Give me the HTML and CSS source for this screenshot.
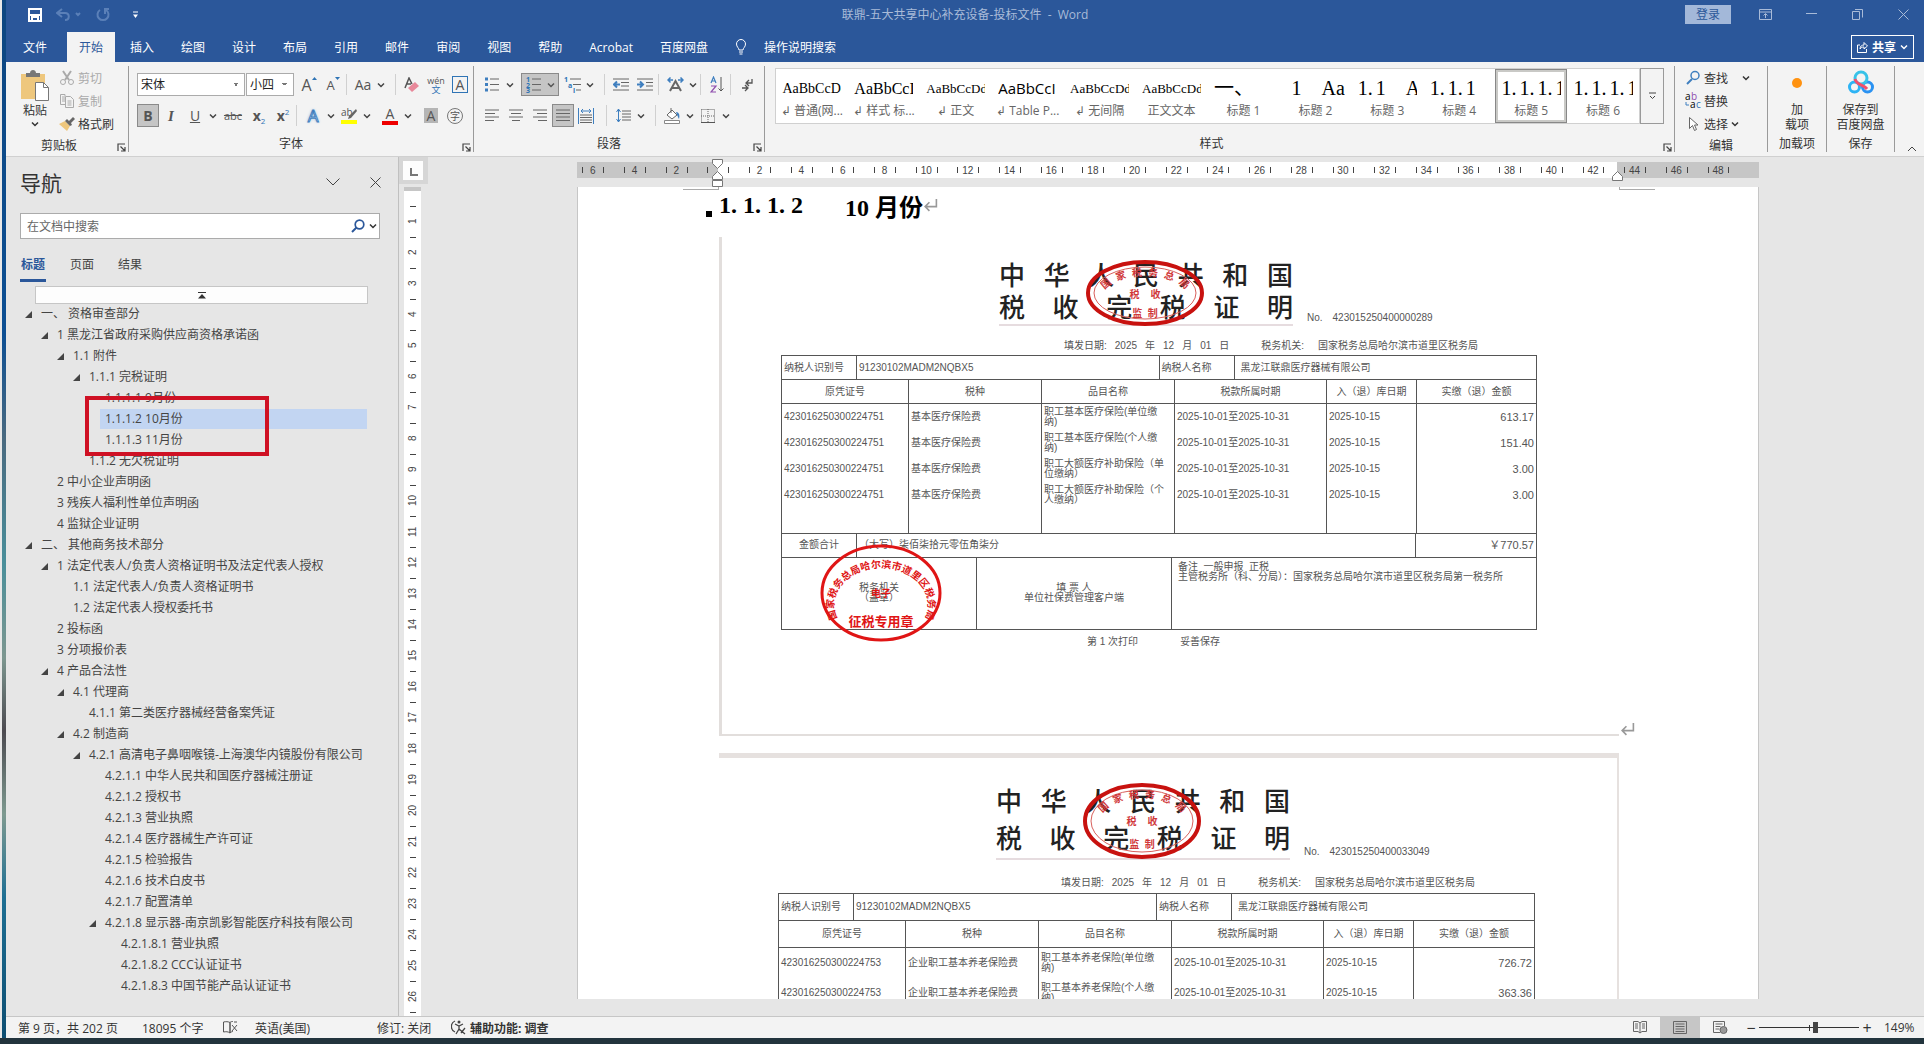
FILE: index.html
```html
<!DOCTYPE html>
<html lang="zh-CN">

<head>
    <meta charset="utf-8">
    <title>联鼎-五大共享中心补充设备-投标文件 - Word</title>
    <link rel="stylesheet" href="styles.css">
</head>

<body>
    <svg class="defs" width="0" height="0">
        <symbol id="chev" viewBox="0 0 8 8"><path d="M1 2.5 4 5.5 7 2.5" fill="none" stroke="currentColor" stroke-width="1.5"/></symbol>
        <symbol id="launch" viewBox="0 0 9 9"><path d="M1 8V1h7M3.500 3.500 7.500 7.500M8 4v4H4" fill="none" stroke="#444" stroke-width="1.200"/></symbol>
        <symbol id="enter" viewBox="0 0 14 14"><path d="M12.500 1v7H2M6 4 2 8l4 4" fill="none" stroke="#999" stroke-width="1.500"/></symbol>
    </svg>

    <div class="app">
        <header>
            <div class="titlebar">
                <div class="quick">
                    <button aria-label="保存"><svg width="14" height="14" viewBox="0 0 14 14"><path d="M1 1h12v12H1zM1 7h12M4 13V9h6v4" fill="none" stroke="#fff" stroke-width="2"/></svg></button>
                    <button aria-label="撤消"><svg width="26" height="14" viewBox="0 0 26 14"><path d="M6 1 1 5l5 4M1 5h8c5 0 5 7 0 7M20 5l2 2 2-2" fill="none" stroke="#5b80b8" stroke-width="2"/></svg></button>
                    <button aria-label="重复"><svg width="14" height="14" viewBox="0 0 14 14"><path d="M4 2a5.500 5.500 0 1 0 6 0M13 1H9v5" fill="none" stroke="#5b80b8" stroke-width="2"/></svg></button>
                    <button class="more" aria-label="自定义快速访问工具栏"><svg width="7" height="8" viewBox="0 0 7 8"><path d="M1 1h5" stroke="#fff"/><path d="M1 3.500h5L3.500 7z" fill="#fff"/></svg></button>
                </div>
                <div class="doc-title">联鼎-五大共享中心补充设备-投标文件&nbsp; -&nbsp; Word</div>
                <div class="win-buttons">
                    <button class="login">登录</button>
                    <button aria-label="功能区显示选项"><svg width="13" height="11" viewBox="0 0 13 11"><path d="M.5.5h12v10H.5zM.5 3h12M6.500 9V5M4.500 6.500l2-2 2 2" fill="none" stroke="#a9bbd8"/></svg></button>
                    <button aria-label="最小化"><svg width="11" height="11" viewBox="0 0 11 11"><path d="M0 4.500h11" stroke="#a9bbd8"/></svg></button>
                    <button aria-label="还原"><svg width="11" height="11" viewBox="0 0 11 11"><path d="M.5 2.500h7v8h-7zM3 .5h7.500v8" fill="none" stroke="#a9bbd8"/></svg></button>
                    <button aria-label="关闭"><svg width="11" height="11" viewBox="0 0 11 11"><path d="M.5.5l10 10M10.500.5l-10 10" stroke="#a9bbd8"/></svg></button>
                </div>
            </div>
            <nav class="tabs">
                <button class="file">文件</button>
                <button class="active">开始</button>
                <button>插入</button>
                <button>绘图</button>
                <button>设计</button>
                <button>布局</button>
                <button>引用</button>
                <button>邮件</button>
                <button>审阅</button>
                <button>视图</button>
                <button>帮助</button>
                <button>Acrobat</button>
                <button>百度网盘</button>
                <button class="tell"><svg width="12" height="16" viewBox="0 0 12 16"><path d="M4 11C4 9 1.500 8 1.500 5a4.500 4.500 0 0 1 9 0C10.500 8 8 9 8 11zM4 13h4M4.500 15h3" fill="none" stroke="#fff"/></svg>操作说明搜索</button>
                <button class="share"><svg width="11" height="12" viewBox="0 0 11 12"><path d="M3 4H.5v7.500h9V8M3 8c0-3 2-4 4-4V1.500l3.500 3.500L7 8V6C5 6 4 6.500 3 8z" fill="none" stroke="#fff"/></svg>共享<svg width="8" height="8"><use href="#chev"/></svg></button>
            </nav>
        </header>

        <div class="ribbon">
            <section class="group clipboard">
                <div class="body">
                    <button class="big">
                        <svg width="30" height="31" viewBox="0 0 30 31"><path d="M1 4h24v25H1z" fill="#eec77d"/><path d="M6 7V3h4c0-4 6-4 6 0h4v4z" fill="#777"/><path d="M15.500 12.500h8l5 5v13h-13z" fill="#fff" stroke="#777"/><path d="M23.500 12.500v5h5" fill="none" stroke="#777"/></svg>
                        <span>粘贴</span>
                        <svg width="8" height="8"><use href="#chev"/></svg>
                    </button>
                    <div class="stack">
                        <button class="off"><svg width="16" height="16" viewBox="0 0 16 16"><path d="M4 1l6 9M12 1 6 10" stroke="#aaa" stroke-width="2"/><circle cx="4" cy="12" r="2.500" fill="none" stroke="#aaa"/><circle cx="12" cy="12" r="2.500" fill="none" stroke="#aaa"/></svg>剪切</button>
                        <button class="off"><svg width="16" height="16" viewBox="0 0 16 16"><path d="M6 3V1.500H1.500v10H6M3 4h3M3 6h3M3 8h3M6.500 3.500h5l3 3v8h-8zM8.500 8h4M8.500 10h4M8.500 12h4" fill="none" stroke="#aaa"/></svg>复制</button>
                        <button><svg width="16" height="16" viewBox="0 0 16 16"><path d="M0 8l6-3 5 5-3 5z" fill="#eec77d"/><path d="M6 5l2-2 2 2 4-4 2 2-4 4 1 2-2 1z" fill="#666"/></svg>格式刷</button>
                    </div>
                </div>
                <h2>剪贴板</h2>
                <button class="launch" aria-label="剪贴板选项"><svg width="9" height="9"><use href="#launch"/></svg></button>
            </section>

            <section class="group font">
                <div class="body rows">
                    <div class="row">
                        <select class="face" aria-label="字体"><option>宋体</option></select>
                        <select class="size" aria-label="字号"><option>小四</option></select>
                        <button class="tb grow">A<svg width="5" height="3" viewBox="0 0 5 3"><path d="M0 3h5L2.500 0z" fill="#2f74b5"/></svg></button>
                        <button class="tb shrink">A<svg width="5" height="3" viewBox="0 0 5 3"><path d="M0 0h5L2.500 3z" fill="#2f74b5"/></svg></button>
                        <i class="sep"></i>
                        <button class="tb">Aa</button>
                        <button class="drop" aria-label="更改大小写"><svg width="8" height="8"><use href="#chev"/></svg></button>
                        <i class="sep wide"></i>
                        <button class="tb" aria-label="清除格式"><svg width="16" height="16" viewBox="0 0 16 16"><path d="M1 11 5 1l3 6M3 7h4" fill="none" stroke="#555" stroke-width="1.500"/><path d="M4 11l7-6 4 4-7 6z" fill="#e8889a"/></svg></button>
                        <button class="tb wen"><span>wén</span><span class="blue">文</span></button>
                        <button class="tb"><span class="boxed">A</span></button>
                    </div>
                    <div class="row">
                        <button class="tb on"><b>B</b></button>
                        <button class="tb ital">I</button>
                        <button class="tb"><u>U</u></button>
                        <button class="drop" aria-label="下划线"><svg width="8" height="8"><use href="#chev"/></svg></button>
                        <button class="tb abc"><s>abc</s></button>
                        <button class="tb"><b>x</b><sub>2</sub></button>
                        <button class="tb"><b>x</b><sup>2</sup></button>
                        <i class="sep"></i>
                        <button class="tb glow">A</button>
                        <button class="drop" aria-label="文本效果"><svg width="8" height="8"><use href="#chev"/></svg></button>
                        <button class="tb" aria-label="突出显示"><svg width="17" height="17" viewBox="0 0 17 17"><text x="0" y="9" class="hl-text">ab</text><path d="M15 2 8 9l-1 3 3-1 6-7z" fill="#666"/><path d="M0 13h16v4H0z" fill="#ff0"/></svg></button>
                        <button class="drop spaced" aria-label="突出显示颜色"><svg width="8" height="8"><use href="#chev"/></svg></button>
                        <button class="tb"><span class="color-a">A</span></button>
                        <button class="drop spaced" aria-label="字体颜色"><svg width="8" height="8"><use href="#chev"/></svg></button>
                        <button class="tb"><span class="shade">A</span></button>
                        <button class="tb"><span class="ring">字</span></button>
                    </div>
                </div>
                <h2>字体</h2>
                <button class="launch" aria-label="字体选项"><svg width="9" height="9"><use href="#launch"/></svg></button>
            </section>

            <section class="group para">
                <div class="body rows">
                    <div class="row">
                        <button class="tb" aria-label="项目符号"><svg width="14" height="15" viewBox="0 0 14 15"><path d="M5 2h9M5 7.500h9M5 13h9" stroke="#666"/><path d="M0 .5h3v3H0zM0 6h3v3H0zM0 11.500h3v3H0z" fill="#3f7fbf"/></svg></button>
                        <button class="drop" aria-label="项目符号库"><svg width="8" height="8"><use href="#chev"/></svg></button>
                        <button class="tb on numbered" aria-label="编号"><svg width="16" height="17" viewBox="0 0 16 17"><path d="M6 3h9M6 8.500h9M6 14h9" stroke="#666"/><text x="0" y="6" class="tiny">1</text><text x="0" y="12" class="tiny">2</text><text x="0" y="17" class="tiny">3</text></svg><svg width="8" height="8"><use href="#chev"/></svg></button>
                        <button class="tb" aria-label="多级列表"><svg width="17" height="17" viewBox="0 0 17 17"><path d="M6 3h11M9 8.500h8M12 14h5" stroke="#666"/><text x="0" y="6" class="tiny">1</text><text x="4" y="12" class="tiny">a</text><text x="9" y="17" class="tiny">i</text></svg></button>
                        <button class="drop" aria-label="列表库"><svg width="8" height="8"><use href="#chev"/></svg></button>
                        <i class="sep wide"></i>
                        <button class="tb" aria-label="减少缩进"><svg width="16" height="14" viewBox="0 0 16 14"><path d="M0 1h16M8 4.500h8M8 8h8M0 12h16" stroke="#666"/><path d="M7 6.500H1M4 3.500l-3 3 3 3" fill="none" stroke="#3f7fbf" stroke-width="2"/></svg></button>
                        <button class="tb" aria-label="增加缩进"><svg width="16" height="14" viewBox="0 0 16 14"><path d="M0 1h16M9 4.500h7M9 8h7M0 12h16" stroke="#666"/><path d="M0 6.500h6M3 3.500l3 3-3 3" fill="none" stroke="#3f7fbf" stroke-width="2"/></svg></button>
                        <i class="sep"></i>
                        <button class="tb" aria-label="中文版式"><svg width="17" height="15" viewBox="0 0 17 15"><path d="M3 14 8.500 4 14 14M5 11h7" fill="none" stroke="#666" stroke-width="2"/><path d="M6 3H1M3.500.5 1 3l2.500 2.500M11 3h5M13.500.5 16 3l-2.500 2.500" fill="none" stroke="#3f7fbf" stroke-width="1.500"/></svg></button>
                        <button class="drop" aria-label="中文版式选项"><svg width="8" height="8"><use href="#chev"/></svg></button>
                        <i class="sep"></i>
                        <button class="tb" aria-label="排序"><svg width="14" height="17" viewBox="0 0 14 17"><path d="M1 7 3.500 1 6 7M2 5h3" fill="none" stroke="#3f7fbf" stroke-width="1.200"/><path d="M1 10h5l-5 6h5" fill="none" stroke="#8f4fae" stroke-width="1.200"/><path d="M11 1v14M8.500 12.500 11 15l2.500-2.500" fill="none" stroke="#555"/></svg></button>
                        <i class="sep"></i>
                        <button class="tb" aria-label="显示编辑标记"><svg width="13" height="14" viewBox="0 0 13 14"><path d="M11 1v4H5M8 2 5 5l3 3M1 10h6M4 7l3 3-3 3" fill="none" stroke="#555" stroke-width="1.300"/></svg></button>
                    </div>
                    <div class="row">
                        <button class="tb" aria-label="左对齐"><svg width="14" height="13" viewBox="0 0 14 13"><path d="M0 1h14M0 4.500h10M0 8h14M0 11.500h9" stroke="#666"/></svg></button>
                        <button class="tb" aria-label="居中"><svg width="14" height="13" viewBox="0 0 14 13"><path d="M0 1h14M2 4.500h10M0 8h14M3 11.500h8" stroke="#666"/></svg></button>
                        <button class="tb" aria-label="右对齐"><svg width="14" height="13" viewBox="0 0 14 13"><path d="M0 1h14M4 4.500h10M0 8h14M5 11.500h9" stroke="#666"/></svg></button>
                        <button class="tb on" aria-label="两端对齐"><svg width="14" height="13" viewBox="0 0 14 13"><path d="M0 1h14M0 4.500h14M0 8h14M0 11.500h14" stroke="#666"/></svg></button>
                        <button class="tb" aria-label="分散对齐"><svg width="16" height="16" viewBox="0 0 16 16"><path d="M.5 0v16M15.500 0v16M3 3h10M5 1 3 3l2 2M11 1l2 2-2 2" fill="none" stroke="#3f7fbf"/><path d="M2 7h12M2 9.500h12M2 12h12M2 14.500h12" stroke="#666"/></svg></button>
                        <i class="sep wide"></i>
                        <button class="tb" aria-label="行距"><svg width="15" height="15" viewBox="0 0 15 15"><path d="M6 3h9M6 6h9M6 9h9M6 12h9" stroke="#666"/><path d="M2.500 1v13M.5 4l2-3 2 3M.5 11l2 3 2-3" fill="none" stroke="#3f7fbf"/></svg></button>
                        <button class="drop" aria-label="行距选项"><svg width="8" height="8"><use href="#chev"/></svg></button>
                        <i class="sep wide"></i>
                        <button class="tb" aria-label="底纹"><svg width="17" height="16" viewBox="0 0 17 16"><path d="M3 7l5-5 5 5-5 4zM7 0v5" fill="#fff" stroke="#666"/><path d="M12 4c3 0 4 3 3 7-1-1-1-3-2-4z" fill="#3f7fbf"/><path d="M.5 12.500h15v3H.5z" fill="#fff" stroke="#888"/></svg></button>
                        <button class="drop" aria-label="底纹颜色"><svg width="8" height="8"><use href="#chev"/></svg></button>
                        <button class="tb" aria-label="边框"><svg width="14" height="14" viewBox="0 0 14 14"><path d="M.5.5h13v13M.5.5v13M7 0v13M0 7h14" fill="none" stroke="#666" stroke-dasharray="1 1"/><path d="M0 13.500h14" stroke="#555"/></svg></button>
                        <button class="drop" aria-label="边框选项"><svg width="8" height="8"><use href="#chev"/></svg></button>
                    </div>
                </div>
                <h2>段落</h2>
                <button class="launch" aria-label="段落选项"><svg width="9" height="9"><use href="#launch"/></svg></button>
            </section>

            <section class="group styles">
                <div class="body">
                    <div class="gallery">
                        <button><span class="pre">AaBbCcDd</span><span class="name">↲ 普通(网...</span></button>
                        <button><span class="pre bigger">AaBbCcI</span><span class="name">↲ 样式 标...</span></button>
                        <button><span class="pre small">AaBbCcDdE</span><span class="name">↲ 正文</span></button>
                        <button><span class="pre sans">AaBbCcI</span><span class="name">↲ Table P...</span></button>
                        <button><span class="pre small">AaBbCcDdE</span><span class="name">↲ 无间隔</span></button>
                        <button><span class="pre small">AaBbCcDdE</span><span class="name">正文文本</span></button>
                        <button><span class="pre head">一、</span><span class="name">标题 1</span></button>
                        <button><span class="pre head end">1 &nbsp; &nbsp;Aa</span><span class="name">标题 2</span></button>
                        <button><span class="pre head"><i>1.</i><i>1</i> &nbsp; &nbsp;A</span><span class="name">标题 3</span></button>
                        <button><span class="pre head"><i>1.</i><i>1.</i><i>1</i></span><span class="name">标题 4</span></button>
                        <button class="picked"><span class="pre head"><i>1.</i><i>1.</i><i>1.</i><i>1</i></span><span class="name">标题 5</span></button>
                        <button><span class="pre head"><i>1.</i><i>1.</i><i>1.</i><i>1</i></span><span class="name">标题 6</span></button>
                    </div>
                    <button class="gallery-more" aria-label="其他样式"><svg width="9" height="8" viewBox="0 0 9 8"><path d="M1 1h7M2 4l2.500 2.500L7 4" fill="none" stroke="#444"/></svg></button>
                </div>
                <h2>样式</h2>
                <button class="launch" aria-label="样式选项"><svg width="9" height="9"><use href="#launch"/></svg></button>
            </section>

            <section class="group edit">
                <div class="body">
                    <div class="stack">
                        <button><svg width="16" height="16" viewBox="0 0 16 16"><circle cx="10" cy="5.500" r="4" fill="none" stroke="#3f7fbf" stroke-width="1.500"/><path d="M7 9l-5 5" stroke="#3f7fbf" stroke-width="2"/></svg>查找<svg class="far" width="8" height="8"><use href="#chev"/></svg></button>
                        <button><svg width="16" height="17" viewBox="0 0 16 17"><text x="0" y="8" class="rep">a</text><text x="6" y="8" class="rep purple">b</text><text x="5" y="16" class="rep">a</text><text x="11" y="16" class="rep blue">c</text><path d="M1 10v3h3" fill="none" stroke="#3f7fbf"/></svg>替换</button>
                        <button><svg width="16" height="16" viewBox="0 0 16 16"><path d="M4.500 1.500v11l3-3 2 5 2-1-2-4.500h3.500z" fill="#fff" stroke="#666"/></svg>选择<svg width="8" height="8"><use href="#chev"/></svg></button>
                    </div>
                </div>
                <h2>编辑</h2>
            </section>

            <section class="group addin">
                <div class="body">
                    <button class="big"><svg width="28" height="34" viewBox="0 0 28 34"><circle cx="14" cy="15" r="5" fill="#ff9210"/></svg><span>加<br>载项</span></button>
                </div>
                <h2>加载项</h2>
            </section>

            <section class="group save">
                <div class="body">
                    <button class="big"><svg width="28" height="34" viewBox="0 0 28 34"><circle cx="7.500" cy="19" r="5" fill="none" stroke="#2cb3f4" stroke-width="3"/><circle cx="20.500" cy="19" r="5" fill="none" stroke="#2a92f2" stroke-width="3"/><circle cx="14" cy="10" r="6" fill="none" stroke="#37c2e8" stroke-width="3"/><path d="M8 11c1 6 8 5 12 10" fill="none" stroke="#f0506c" stroke-width="3"/></svg><span>保存到<br>百度网盘</span></button>
                </div>
                <h2>保存</h2>
            </section>
            <button class="collapse" aria-label="折叠功能区"><svg width="10" height="6" viewBox="0 0 10 6"><path d="M1 5l4-4 4 4" fill="none" stroke="#444"/></svg></button>
        </div>

        <main>
            <aside class="nav-pane">
                <div class="pane-head">
                    <h1>导航</h1>
                    <button aria-label="任务窗格选项"><svg width="14" height="8" viewBox="0 0 14 8"><path d="M.5.5 7 7 13.500.5" fill="none" stroke="#444"/></svg></button>
                    <button aria-label="关闭导航"><svg width="11" height="11" viewBox="0 0 11 11"><path d="M.5.5l10 10M10.500.5l-10 10" stroke="#444"/></svg></button>
                </div>
                <div class="search">
                    <input type="text" placeholder="在文档中搜索" aria-label="在文档中搜索">
                    <button aria-label="搜索"><svg width="14" height="14" viewBox="0 0 14 14"><circle cx="8.500" cy="5.500" r="4.300" fill="none" stroke="#2b579a" stroke-width="1.700"/><path d="M5.500 8.500 1 13" stroke="#2b579a" stroke-width="2"/></svg></button>
                    <button aria-label="搜索选项"><svg width="8" height="8"><use href="#chev"/></svg></button>
                </div>
                <div class="pane-tabs">
                    <button class="active">标题</button>
                    <button>页面</button>
                    <button>结果</button>
                </div>
                <button class="to-top" aria-label="跳转到文档开头"><svg width="8" height="7" viewBox="0 0 8 7"><path d="M0 .5h8" stroke="#333"/><path d="M0 6.500h8L4 2z" fill="#333"/></svg></button>
                <ul class="tree">
                    <li class="l1 open"><a href="#">一、&nbsp;资格审查部分</a></li>
                    <li class="l2 open"><a href="#">1 黑龙江省政府采购供应商资格承诺函</a></li>
                    <li class="l3 open"><a href="#">1.1 附件</a></li>
                    <li class="l4 open"><a href="#">1.1.1 完税证明</a></li>
                    <li class="l5"><a href="#">1.1.1.1 9月份</a></li>
                    <li class="l5 current"><a href="#">1.1.1.2 10月份</a></li>
                    <li class="l5"><a href="#">1.1.1.3 11月份</a></li>
                    <li class="l4"><a href="#">1.1.2 无欠税证明</a></li>
                    <li class="l2"><a href="#">2 中小企业声明函</a></li>
                    <li class="l2"><a href="#">3 残疾人福利性单位声明函</a></li>
                    <li class="l2"><a href="#">4 监狱企业证明</a></li>
                    <li class="l1 open"><a href="#">二、&nbsp;其他商务技术部分</a></li>
                    <li class="l2 open"><a href="#">1 法定代表人/负责人资格证明书及法定代表人授权</a></li>
                    <li class="l3"><a href="#">1.1 法定代表人/负责人资格证明书</a></li>
                    <li class="l3"><a href="#">1.2 法定代表人授权委托书</a></li>
                    <li class="l2"><a href="#">2 投标函</a></li>
                    <li class="l2"><a href="#">3 分项报价表</a></li>
                    <li class="l2 open"><a href="#">4 产品合法性</a></li>
                    <li class="l3 open"><a href="#">4.1 代理商</a></li>
                    <li class="l4"><a href="#">4.1.1 第二类医疗器械经营备案凭证</a></li>
                    <li class="l3 open"><a href="#">4.2 制造商</a></li>
                    <li class="l4 open"><a href="#">4.2.1 高清电子鼻咽喉镜-上海澳华内镜股份有限公司</a></li>
                    <li class="l5"><a href="#">4.2.1.1 中华人民共和国医疗器械注册证</a></li>
                    <li class="l5"><a href="#">4.2.1.2 授权书</a></li>
                    <li class="l5"><a href="#">4.2.1.3 营业执照</a></li>
                    <li class="l5"><a href="#">4.2.1.4 医疗器械生产许可证</a></li>
                    <li class="l5"><a href="#">4.2.1.5 检验报告</a></li>
                    <li class="l5"><a href="#">4.2.1.6 技术白皮书</a></li>
                    <li class="l5"><a href="#">4.2.1.7 配置清单</a></li>
                    <li class="l5 open"><a href="#">4.2.1.8 显示器-南京凯影智能医疗科技有限公司</a></li>
                    <li class="l6"><a href="#">4.2.1.8.1 营业执照</a></li>
                    <li class="l6"><a href="#">4.2.1.8.2 CCC认证证书</a></li>
                    <li class="l6"><a href="#">4.2.1.8.3 中国节能产品认证证书</a></li>
                    <li class="mark" aria-hidden="true"></li>
                </ul>
            </aside>

            <div class="v-ruler">
                <div class="corner"><span></span></div>
                <div class="v-scale">
                    <span>1</span><span>2</span><span>3</span><span>4</span><span>5</span><span>6</span><span>7</span><span>8</span><span>9</span><span>10</span><span>11</span><span>12</span><span>13</span><span>14</span><span>15</span><span>16</span><span>17</span><span>18</span><span>19</span><span>20</span><span>21</span><span>22</span><span>23</span><span>24</span><span>25</span><span>26</span><span></span>
                </div>
            </div>

            <div class="doc">
                <div class="h-ruler">
                    <div class="h-scale">
                        <span>6</span><span>4</span><span>2</span><span></span><span>2</span><span>4</span><span>6</span><span>8</span><span>10</span><span>12</span><span>14</span><span>16</span><span>18</span><span>20</span><span>22</span><span>24</span><span>26</span><span>28</span><span>30</span><span>32</span><span>34</span><span>36</span><span>38</span><span>40</span><span>42</span><span>44</span><span>46</span><span>48</span>
                    </div>
                    <svg class="indent-left" width="11" height="28" viewBox="0 0 11 28"><path d="M.5.5h10v4l-5 5-5-5zM.5 20.500v-3l5-5 5 5v3zM.5 21.500h10v6H.5z" fill="#fff" stroke="#777"/></svg>
                    <svg class="indent-right" width="11" height="10" viewBox="0 0 11 10"><path d="M.5 9.500v-4l5-5 5 5v4z" fill="#fff" stroke="#777"/></svg>
                </div>
                <article class="paper">
                    <div class="crop"><i></i><i></i></div>
                    <h3><i>1.</i><i>1.</i><i>1.</i><i class="last">2</i>10 月份<svg width="15" height="15"><use href="#enter"/></svg></h3>

                    <figure class="cert first">
                        <div class="cert-head">
                            <div class="cert-title">
                                <p>中华人民共和国</p>
                                <p>税收完税证明</p>
                                <svg class="seal" viewBox="0 0 118 68">
                                    <ellipse cx="59" cy="34" rx="57" ry="31" fill="none" stroke="#c8120f" stroke-width="4"/>
                                    <ellipse cx="59" cy="34" rx="51" ry="26" fill="none" stroke="#d8605c"/>
                                    <path id="arc1" d="M16 38A43 21 0 0 1 102 38" fill="none"/>
                                    <text class="seal-text"><textPath href="#arc1" startOffset="50%">国&#160;&#160;家&#160;&#160;税&#160;&#160;务&#160;&#160;总&#160;&#160;局</textPath></text>
                                    <text class="seal-text" x="59" y="39">税&#160;&#160;&#160;&#160;收</text>
                                    <text class="seal-text" x="59" y="58">监&#160;&#160;制</text>
                                </svg>
                            </div>
                            <div class="cert-no"><span>No.</span><span>423015250400000289</span></div>
                        </div>
                        <div class="cert-date"><span>填发日期:</span><span>2025</span><span>年</span><span>12</span><span>月</span><span>01</span><span>日</span><span class="office">税务机关:</span><span class="bureau">国家税务总局哈尔滨市道里区税务局</span></div>
                        <table class="parties">
                            <tr><th>纳税人识别号</th><td>91230102MADM2NQBX5</td><th>纳税人名称</th><td class="company">黑龙江联鼎医疗器械有限公司</td></tr>
                        </table>
                        <table class="items">
                            <thead><tr><th class="c1">原凭证号</th><th class="c2">税种</th><th class="c3">品目名称</th><th class="c4">税款所属时期</th><th class="c5">入（退）库日期</th><th>实缴（退）金额</th></tr></thead>
                            <tbody>
                                <tr><td>423016250300224751</td><td>基本医疗保险费</td><td class="item">职工基本医疗保险(单位缴纳)</td><td>2025-10-01至2025-10-31</td><td>2025-10-15</td><td class="money">613.17</td></tr>
                                <tr><td>423016250300224751</td><td>基本医疗保险费</td><td class="item">职工基本医疗保险(个人缴纳)</td><td>2025-10-01至2025-10-31</td><td>2025-10-15</td><td class="money">151.40</td></tr>
                                <tr><td>423016250300224751</td><td>基本医疗保险费</td><td class="item">职工大额医疗补助保险（单位缴纳）</td><td>2025-10-01至2025-10-31</td><td>2025-10-15</td><td class="money">3.00</td></tr>
                                <tr><td>423016250300224751</td><td>基本医疗保险费</td><td class="item">职工大额医疗补助保险（个人缴纳）</td><td>2025-10-01至2025-10-31</td><td>2025-10-15</td><td class="money">3.00</td></tr>
                                <tr><td></td><td></td><td></td><td></td><td></td><td></td></tr>
                            </tbody>
                        </table>
                        <table class="total">
                            <tr><th>金额合计</th><td>（大写）柒佰柒拾元零伍角柒分</td><td class="money">￥770.57</td></tr>
                        </table>
                        <table class="sign">
                            <tr>
                                <td>税务机关<br>（盖章）
                                    <svg class="office-seal" viewBox="0 0 122 98">
                                        <ellipse cx="61" cy="49" rx="59" ry="47" fill="none" stroke="#e01515" stroke-width="3"/>
                                        <path id="arc2" d="M17 74A47 37 0 1 1 105 74" fill="none"/>
                                        <text class="red-text"><textPath href="#arc2" startOffset="50%">国家税务总局哈尔滨市道里区税务局</textPath></text>
                                        <text class="red-text" x="61" y="53">电子</text>
                                        <text class="red-text use" x="61" y="82">征税专用章</text>
                                    </svg>
                                </td>
                                <td>填 票 人<br>单位社保费管理客户端</td>
                                <td class="remark">备注&nbsp; 一般申报&nbsp; 正税<br>主管税务所（科、分局）：国家税务总局哈尔滨市道里区税务局第一税务所</td>
                            </tr>
                        </table>
                        <figcaption><span>第 1 次打印</span><span>妥善保存</span></figcaption>
                    </figure>
                    <svg class="para-end" width="15" height="15"><use href="#enter"/></svg>

                    <figure class="cert second">
                        <div class="cert-head">
                            <div class="cert-title">
                                <p>中华人民共和国</p>
                                <p>税收完税证明</p>
                                <svg class="seal" viewBox="0 0 118 76">
                                    <ellipse cx="59" cy="38" rx="57" ry="36" fill="none" stroke="#c8120f" stroke-width="4"/>
                                    <ellipse cx="59" cy="38" rx="51" ry="31" fill="none" stroke="#d8605c"/>
                                    <path id="arc3" d="M16 40A43 25 0 0 1 102 40" fill="none"/>
                                    <text class="seal-text"><textPath href="#arc3" startOffset="50%">国&#160;&#160;家&#160;&#160;税&#160;&#160;务&#160;&#160;总&#160;&#160;局</textPath></text>
                                    <text class="seal-text" x="59" y="42">税&#160;&#160;&#160;&#160;收</text>
                                    <text class="seal-text" x="59" y="65">监&#160;&#160;制</text>
                                </svg>
                            </div>
                            <div class="cert-no"><span>No.</span><span>423015250400033049</span></div>
                        </div>
                        <div class="cert-date"><span>填发日期:</span><span>2025</span><span>年</span><span>12</span><span>月</span><span>01</span><span>日</span><span class="office">税务机关:</span><span class="bureau">国家税务总局哈尔滨市道里区税务局</span></div>
                        <table class="parties">
                            <tr><th>纳税人识别号</th><td>91230102MADM2NQBX5</td><th>纳税人名称</th><td class="company">黑龙江联鼎医疗器械有限公司</td></tr>
                        </table>
                        <table class="items">
                            <thead><tr><th class="c1">原凭证号</th><th class="c2">税种</th><th class="c3">品目名称</th><th class="c4">税款所属时期</th><th class="c5">入（退）库日期</th><th>实缴（退）金额</th></tr></thead>
                            <tbody>
                                <tr><td>423016250300224753</td><td>企业职工基本养老保险费</td><td class="item">职工基本养老保险(单位缴纳)</td><td>2025-10-01至2025-10-31</td><td>2025-10-15</td><td class="money">726.72</td></tr>
                                <tr><td>423016250300224753</td><td>企业职工基本养老保险费</td><td class="item">职工基本养老保险(个人缴纳)</td><td>2025-10-01至2025-10-31</td><td>2025-10-15</td><td class="money">363.36</td></tr>
                            </tbody>
                        </table>
                    </figure>
                </article>
            </div>
        </main>

        <footer>
            <span class="pages">第 9 页，共 202 页</span>
            <span class="words">18095 个字</span>
            <button class="proof" aria-label="校对"><svg width="15" height="13" viewBox="0 0 15 13"><path d="M7 1.500C5 .5 3 .5.500 1v10c2.500-.5 4.500-.5 6.500 1zM7 1.500V12c1-1 2-1.500 3-1.500M7 1.500c1-1 2-1 3-1M9 4l5 6M14 4 9 10M11 1h3" fill="none" stroke="#555"/></svg></button>
            <span class="lang">英语(美国)</span>
            <span class="track">修订: 关闭</span>
            <button class="access"><svg width="16" height="15" viewBox="0 0 16 15"><path d="M4 1a6 6 0 0 0 0 11M4 4l4 2 4-2M8 6v3l-3 5M8 9l6 5M14 8l-4 5" fill="none" stroke="#444" stroke-width="1.300"/><circle cx="8" cy="2" r="1.500" fill="#444"/></svg>辅助功能: 调查</button>
            <div class="views">
                <button aria-label="阅读视图"><svg width="14" height="13" viewBox="0 0 14 13"><path d="M7 2 5 .5H.5v10H5L7 12l2-1.500h4.500V.5H9zM7 2v10M2 3h3M2 5h3M2 7h3M9 3h3M9 5h3M9 7h3" fill="none" stroke="#666"/></svg></button>
                <button class="active" aria-label="页面视图"><svg width="14" height="13" viewBox="0 0 14 13"><path d="M.5.5h13v12H.5zM2.500 3h9M2.500 5.500h9M2.500 8h9M2.500 10.500h9" fill="none" stroke="#666"/></svg></button>
                <button aria-label="Web 版式"><svg width="15" height="13" viewBox="0 0 15 13"><path d="M7 11.500H.5V.5h11V5M2.500 3h7M2.500 5.500h5M2.500 8h4" fill="none" stroke="#666"/><circle cx="10.500" cy="9" r="3.500" fill="#999" stroke="#666"/></svg></button>
            </div>
            <div class="zoom">
                <button aria-label="缩小">−</button>
                <input type="range" min="0" max="200" value="113" aria-label="显示比例">
                <button aria-label="放大">+</button>
                <span>149%</span>
            </div>
        </footer>
    </div>
</body>

</html>
```
FILE: styles.css
```css
* {
    box-sizing: border-box;
}

body {
    margin: 0;
    height: 100vh;
    overflow: hidden;
    padding: 0 0 6px 6px;
    font-family: "Open Sans", "Noto Sans CJK SC", sans-serif;
    font-size: 12px;
    color: #333;
    /* desktop showing behind the window */
    background:
        linear-gradient(#22343d, #22343d) bottom / 100% 6px no-repeat,
        linear-gradient(to right, #e8e8e8 2px, transparent 2px),
        linear-gradient(#0d4680 0, #0d4f93 32%, #4a6a80 42%, #4a8f9a 54%, #7d9790 63%, #4c4a50 70%, #7e9a90 78%, #1e6f93 86%, #0c4c70 100%);
}

button {
    border: none;
    background: none;
    padding: 0;
    margin: 0;
    font: inherit;
    color: inherit;
    display: flex;
    align-items: center;
    justify-content: center;
}

h1, h2, h3, p, ul, figure {
    margin: 0;
    padding: 0;
    font-weight: normal;
}

i {
    font-style: normal;
}

svg {
    flex: none;
}

.defs {
    position: absolute;
}

.blue {
    color: #2f74b5;
    fill: #2f74b5;
}

.app {
    height: 100%;
    display: flex;
    flex-direction: column;
    background: #e6e6e6;
}

/* title bar and tabs */
header {
    background: #2b579a;
    color: #fff;
}

.titlebar {
    display: grid;
    grid-template-columns: 1fr auto 1fr;
    height: 32px;
}

.quick {
    display: flex;
    align-items: center;
    gap: 14px;
    padding-left: 22px;
    height: 29px;
}

.quick .more {
    margin-left: 8px;
}

.doc-title {
    color: #a9bbd8;
    line-height: 29px;
}

.win-buttons {
    display: flex;
    justify-content: flex-end;
    height: 28px;
    align-items: center;
    padding-right: 9px;
}

.win-buttons button {
    width: 24px;
    margin-left: 22px;
}

.win-buttons .login {
    width: 46px;
    height: 19px;
    background: #a3b8d9;
    color: #2b579a;
}

.tabs {
    display: flex;
    height: 30px;
    gap: 3px;
    padding: 0 10px 0 5px;
}

.tabs button {
    padding: 0 12px;
    height: 30px;
}

.tabs .file {
    margin-right: 5px;
}

.tabs .active {
    background: #f3f3f3;
    color: #2b579a;
}

.tabs .tell {
    gap: 17px;
}

.tabs .share {
    margin: 3px 0 0 auto;
    height: 24px;
    padding: 0 5px;
    gap: 4px;
    border: 1px solid #fff;
    font-weight: bold;
}

/* ribbon */
.ribbon {
    display: flex;
    height: 95px;
    padding: 4px 0;
    background: #f3f3f3;
    border-bottom: 1px solid #d0d0d0;
}

.group {
    position: relative;
    border-right: 1px solid #9a9a9a;
    display: flex;
    flex-direction: column;
}

.group .body {
    display: flex;
    height: 70px;
}

.group h2 {
    font-size: 12px;
    line-height: 16px;
    padding-top: 3px;
    text-align: center;
    color: #333;
}

.launch {
    position: absolute;
    right: 2px;
    bottom: 0;
}

.clipboard {
    width: 123px;
}

.clipboard h2,
.styles h2 {
    padding-right: 16px;
}

.font {
    width: 345px;
}

.font h2,
.para h2 {
    padding-right: 20px;
}

.para {
    width: 291px;
}

.styles {
    flex: 1;
    min-width: 0;
}

.edit {
    width: 93px;
}

.addin {
    width: 59px;
}

.save {
    width: 68px;
}

.big {
    flex-direction: column;
    justify-content: flex-start;
    line-height: 15px;
    padding-top: 2px;
}

.clipboard .big {
    width: 44px;
    margin-left: 7px;
    padding-top: 4px;
    gap: 2px;
}

.addin .big,
.save .big {
    flex: 1;
}

.stack {
    display: flex;
    flex-direction: column;
}

.stack button {
    height: 23px;
    gap: 3px;
    justify-content: flex-start;
}

.clipboard .stack {
    margin-left: 2px;
}

.edit .stack {
    margin-left: 10px;
}

.off {
    color: #aaa;
}

.far {
    margin-left: 11px;
}

.rep {
    font-size: 10px;
}

.purple {
    fill: #8f4fae;
}

.rows {
    flex-direction: column;
    gap: 8px;
    padding: 7px 0 0 8px;
}

.para .rows {
    padding-left: 6px;
}

.row {
    display: flex;
    height: 23px;
    align-items: center;
}

select {
    height: 23px;
    border: 1px solid #ababab;
    border-radius: 0;
    padding: 0 3px;
    margin-right: 1px;
    font: inherit;
    color: #222;
    appearance: none;
    background-color: #fff;
    background-image: linear-gradient(45deg, transparent 50%, #777 50%), linear-gradient(-45deg, transparent 50%, #777 50%);
    background-size: 3px 3px;
    background-repeat: no-repeat;
    background-position: right 8px center, right 5px center;
}

.face {
    width: 108px;
}

.size {
    width: 48px;
    margin-right: 3px;
}

.tb {
    width: 24px;
    height: 23px;
    font-size: 14px;
    line-height: 20px;
    color: #555;
}

.tb.on {
    width: 22px;
    background: #c5c5c5;
    border: 1px solid #8a8a8a;
}

.tb.numbered {
    width: 38px;
    gap: 5px;
    margin: 0 1px 0 5px;
}

.tb sup,
.tb sub {
    font-size: 8px;
    line-height: 10px;
    color: #2f74b5;
}

.tb sup {
    margin-bottom: 8px;
}

.tb sub {
    margin-top: 10px;
}

.grow {
    font-size: 16px;
}

.shrink {
    font-size: 13px;
}

.grow svg,
.shrink svg {
    margin-bottom: 12px;
}

.ital {
    font-family: "Liberation Serif", serif;
    font-style: italic;
    font-weight: bold;
    font-size: 15px;
}

.abc {
    width: 28px;
    font-size: 11px;
}

.wen {
    flex-direction: column;
    font-size: 9px;
    line-height: 9px;
}

.boxed {
    border: 1px solid #2f74b5;
    width: 16px;
    line-height: 15px;
}

.shade {
    background: #b5b5b5;
    width: 14px;
    line-height: 15px;
}

.ring {
    border: 1px solid #777;
    border-radius: 50%;
    width: 16px;
    font-size: 10px;
    line-height: 14px;
}

.glow {
    font-size: 17px;
    color: #fff;
    -webkit-text-stroke: 1px #3f7fbf;
    text-shadow: 0 0 3px #6aa5dc;
}

.color-a {
    border-bottom: 4px solid #e00;
    width: 16px;
    line-height: 14px;
}

.hl-text {
    font-size: 10px;
    fill: #555;
}

.tiny {
    font-size: 7px;
    font-weight: bold;
    fill: #2f74b5;
}

.drop {
    width: 12px;
    height: 23px;
    color: #444;
}

.spaced {
    margin-right: 5px;
}

.row .sep {
    width: 1px;
    height: 21px;
    margin: 0 4px 0 1px;
    background: #d0d0d0;
}

.row .sep.wide {
    margin: 0 4px 0 8px;
}

.styles .body {
    padding: 2px 10px 9px;
}

.gallery {
    flex: 1;
    min-width: 0;
    display: grid;
    grid-template-columns: repeat(12, 1fr);
    background: #fff;
    border: 1px solid #d0d0d0;
}

.gallery button {
    flex-direction: column;
    padding: 3px 4px 0;
    min-width: 0;
    border: 2px solid transparent;
}

.gallery .picked {
    border: 3px solid #c9c9c6;
    outline: 1px solid #888;
    padding: 3px 3px 0;
    outline-offset: -1px;
}

.pre {
    width: 59px;
    height: 27px;
    line-height: 27px;
    overflow: hidden;
    white-space: nowrap;
    text-align: left;
    font-family: "Liberation Serif", "Noto Sans CJK SC", serif;
    font-size: 14px;
    color: #000;
}

.bigger {
    font-size: 16px;
}

.small {
    font-size: 13px;
}

.sans {
    font-family: "Open Sans", sans-serif;
    font-size: 15px;
}

.head {
    font-size: 20px;
}

.pre.end {
    text-align: right;
}

.pre i + i {
    margin-left: 3px;
}

.name {
    white-space: nowrap;
    line-height: 18px;
    color: #666;
}

.gallery-more {
    width: 24px;
    border: 1px solid #999;
}

.collapse {
    flex: none;
    width: 29px;
    align-items: flex-end;
    padding-left: 4px;
}

/* working area */
main {
    flex: 1;
    min-height: 0;
    display: grid;
    grid-template-columns: 393px 29px 1fr;
    grid-template-rows: minmax(0, 1fr);
}

.nav-pane {
    border-right: 1px solid #c0c0c0;
    overflow: hidden;
}

.pane-head {
    display: flex;
    align-items: center;
    height: 46px;
    margin: 2px 17px 0 14px;
    gap: 30px;
}

.pane-head h1 {
    font-size: 21px;
    color: #333;
    margin-right: auto;
}

.search {
    display: flex;
    align-items: center;
    height: 26px;
    margin: 8px 18px 0 14px;
    border: 1px solid #ababab;
    background: #fff;
    padding-right: 2px;
    gap: 4px;
}

.search input {
    flex: 1;
    border: none;
    outline: none;
    font: inherit;
    padding: 0 6px;
}

.search input::placeholder {
    color: #666;
}

.pane-tabs {
    display: flex;
    gap: 24px;
    margin: 14px 14px 0;
}

.pane-tabs button {
    height: 29px;
    padding-bottom: 4px;
    color: #444;
    border-bottom: 3px solid transparent;
}

.pane-tabs .active {
    width: 26px;
    color: #2b579a;
    font-weight: bold;
    border-color: #2b579a;
}

.to-top {
    width: calc(100% - 59px);
    height: 18px;
    margin: 4px 0 0 29px;
    background: #fdfdfd;
    border: 1px solid #c6c6c6;
}

.tree {
    position: relative;
    list-style: none;
    margin-right: 31px;
}

.tree li {
    position: relative;
    height: 21px;
    line-height: 20px;
    white-space: nowrap;
}

.tree a {
    display: block;
    height: 20px;
    padding-left: 5px;
    color: #444;
    text-decoration: none;
}

.tree .open::before {
    content: "";
    position: absolute;
    left: -11px;
    top: 7px;
    border-left: 7px solid transparent;
    border-bottom: 7px solid #444;
}

.tree .current a {
    background: #c2d5f2;
}

.tree .l1 { margin-left: 30px; }
.tree .l2 { margin-left: 46px; }
.tree .l3 { margin-left: 62px; }
.tree .l4 { margin-left: 78px; }
.tree .l5 { margin-left: 94px; }
.tree .l6 { margin-left: 110px; }

/* red box round the month entries */
.tree .mark {
    position: absolute;
    left: 79px;
    top: 92px;
    width: 184px;
    height: 60px;
    border: 4px solid #cf1124;
}

.v-ruler {
    display: flex;
    flex-direction: column;
    min-height: 0;
    overflow: hidden;
}

.corner {
    height: 27px;
    padding: 4px;
    background: #d6d6d6;
}

.corner span {
    display: block;
    width: 20px;
    height: 19px;
    background: #fdfdfd;
}

.corner span::after {
    content: "";
    display: block;
    width: 6px;
    height: 6px;
    border-left: 2px solid #777;
    border-bottom: 2px solid #777;
    transform: translate(7px, 7px);
}

.v-scale {
    flex: 1;
    width: 17px;
    margin: 3px 0 0 5px;
    padding-top: 15px;
    background: #fff;
    border-top: 4px solid #c6c6c6;
    overflow: hidden;
}

.v-scale span {
    position: relative;
    display: flex;
    align-items: center;
    justify-content: center;
    height: 31px;
    width: 17px;
    writing-mode: vertical-rl;
    transform: rotate(180deg);
    font: 10px "Liberation Sans", sans-serif;
    color: #444;
}

.v-scale span::after {
    content: "";
    position: absolute;
    bottom: 0;
    left: 5px;
    width: 6px;
    height: 1px;
    background: #444;
}

.doc {
    min-width: 0;
    padding: 5px 165px 17px 149px;
    display: flex;
    flex-direction: column;
}

.h-ruler {
    position: relative;
    flex: none;
    height: 16px;
    margin-bottom: 9px;
    background: linear-gradient(to right, #c6c6c6 141px, #fff 141px, #fff calc(100% - 142px), #c6c6c6 calc(100% - 142px));
}

.h-scale {
    display: flex;
    height: 16px;
    overflow: hidden;
    padding-right: 20px;
}

.h-scale span {
    flex: 1;
    display: flex;
    align-items: center;
    justify-content: center;
    font: 10px "Liberation Sans", sans-serif;
    color: #444;
    position: relative;
}

.h-scale span:first-child {
    margin-left: -5px;
}

.h-scale span::before,
.h-scale span::after {
    content: "";
    position: absolute;
    left: 25%;
    width: 1px;
    height: 6px;
    background: #444;
}

.h-scale span::after {
    left: 75%;
}

.indent-left {
    position: absolute;
    left: 135px;
    top: -3px;
    z-index: 1;
}

.indent-right {
    position: absolute;
    right: 136px;
    top: 9px;
}

.paper {
    flex: 1;
    min-height: 0;
    overflow: hidden;
    background: #fff;
    border: solid #c6c6c6;
    border-width: 0 1px;
    padding: 0 139px 0 141px;
}

.crop {
    display: flex;
    justify-content: space-between;
    height: 3px;
    margin: 0 -36px;
}

.crop i {
    width: 36px;
    border: solid #aaa;
    border-width: 0 1px 1px 0;
}

.crop i + i {
    border-width: 0 0 1px 1px;
}

.paper h3 {
    display: flex;
    align-items: center;
    position: relative;
    height: 30px;
    font: 24px "Liberation Serif", "Noto Sans CJK SC", serif;
    font-weight: bold;
    color: #000;
    white-space: pre;
}

.paper h3::before {
    content: "";
    position: absolute;
    left: -13px;
    top: 21px;
    width: 6px;
    height: 6px;
    background: #000;
}

.paper h3 i {
    margin-right: 6px;
}

.paper h3 .last {
    margin-right: 42px;
}

/* certificates */
.cert {
    font-family: "Liberation Sans", "Noto Sans CJK SC", sans-serif;
    font-size: 10px;
    line-height: 10px;
    color: #555;
}

.first {
    height: 499px;
    margin-top: 17px;
    padding: 23px 82px 0 59px;
    border: solid #e2dedc;
    border-width: 0 0 2px 3px;
}

.second {
    margin-top: 17px;
    padding: 26px 82px 0 59px;
    border: solid #e6e1df;
    border-width: 5px 2px 0 0;
}

.cert-head {
    display: flex;
    align-items: flex-end;
    gap: 14px;
    margin-left: 218px;
}

.cert-title {
    position: relative;
    width: 294px;
    color: #222;
    font-size: 26px;
    font-weight: 500;
    line-height: 32px;
    border-bottom: 2px solid #e6dcdf;
}

.second .cert-title {
    line-height: 37px;
}

.cert-title p {
    font-weight: 500;
    text-align: justify;
    text-align-last: justify;
}

.seal {
    position: absolute;
    left: 87px;
    top: -1px;
    width: 118px;
}

.seal-text {
    font-size: 10px;
    font-weight: bold;
    fill: #d0383a;
    text-anchor: middle;
}

.cert-no {
    display: flex;
    gap: 10px;
    line-height: 17px;
}

.cert-date {
    display: flex;
    gap: 8px;
    height: 14px;
    line-height: 14px;
    margin: 13px 0 3px 283px;
    white-space: nowrap;
}

.second .cert-date {
    margin: 16px 0 4px 283px;
}

.office {
    margin-left: 24px;
}

.bureau {
    margin-left: 6px;
}

.cert table {
    width: 100%;
    table-layout: fixed;
    border-collapse: collapse;
    margin-top: -1px;
}

.cert th,
.cert td {
    height: 24px;
    padding: 0 2px;
    border: 1px solid #555;
    font-weight: normal;
    text-align: left;
}

.second th,
.second .parties td {
    height: 27px;
}

.cert th {
    white-space: nowrap;
}

.parties th,
.total th {
    width: 75px;
}

.cert .company {
    padding-left: 6px;
}

.cert .items th,
.cert .total th {
    text-align: center;
}

.items .c1 { width: 127px; }
.items .c2 { width: 133px; }
.items .c3 { width: 133px; }
.items .c4 { width: 152px; }
.items .c5 { width: 90px; }

.cert .items tbody td {
    height: 26px;
    border-top: none;
    border-bottom: none;
}

.cert.second .items tbody td {
    height: 30px;
}

.cert .items .item {
    padding-right: 6px;
}

.cert .money {
    width: 121px;
    text-align: right;
    font-size: 11px;
}

.sign td {
    width: 195px;
}

.cert .sign td {
    position: relative;
    height: 72px;
    text-align: center;
}

.cert .sign .remark {
    width: auto;
    padding: 4px 6px;
    text-align: left;
    vertical-align: top;
    white-space: nowrap;
}

.office-seal {
    position: absolute;
    left: 38px;
    top: -14px;
    width: 122px;
}

.red-text {
    font-size: 10px;
    font-weight: bold;
    fill: #e01515;
    text-anchor: middle;
}

.use {
    font-size: 13px;
}

figcaption {
    display: flex;
    gap: 42px;
    margin: 7px 0 0 306px;
}

.para-end {
    float: right;
    margin: -14px -16px 0 0;
}

/* status bar */
footer {
    display: flex;
    align-items: center;
    height: 22px;
    background: #f3f3f3;
    border-top: 1px solid #c6c6c6;
    padding: 0 8px 0 12px;
    white-space: nowrap;
}

.pages {
    width: 124px;
}

.words {
    width: 80px;
}

.proof {
    width: 16px;
    margin-right: 17px;
}

.lang {
    width: 122px;
}

.track {
    width: 74px;
}

.access {
    gap: 3px;
    font-weight: bold;
}

.views {
    display: flex;
    height: 100%;
    margin-left: auto;
}

.views button {
    width: 40px;
}

.views .active {
    background: #c6c6c6;
}

.zoom {
    display: flex;
    align-items: center;
    margin-left: 5px;
}

.zoom button {
    width: 12px;
    font-size: 16px;
    line-height: 16px;
}

.zoom input {
    appearance: none;
    width: 100px;
    height: 12px;
    margin: 0 2px;
    background: linear-gradient(#333, #333) center / 100% 1px no-repeat, linear-gradient(#333, #333) center / 1px 6px no-repeat;
}

.zoom input::-webkit-slider-thumb {
    appearance: none;
    width: 5px;
    height: 11px;
    background: #444;
}

.zoom span {
    width: 32px;
    margin-left: 11px;
}
```
